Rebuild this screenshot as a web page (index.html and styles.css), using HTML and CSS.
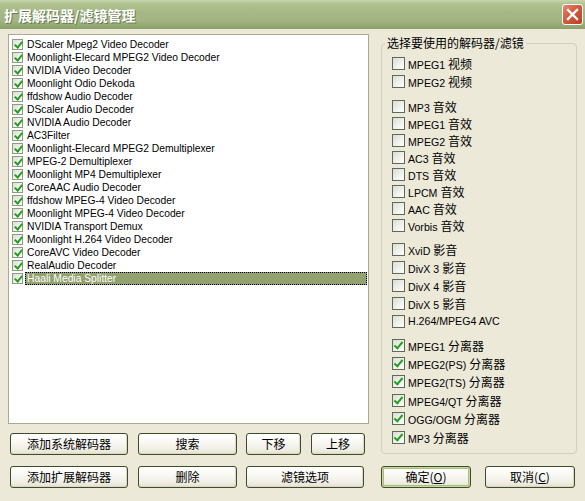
FILE: index.html
```html
<!DOCTYPE html>
<html lang="zh-CN">
<head>
<meta charset="utf-8">
<title>扩展解码器/滤镜管理</title>
<link rel="stylesheet" href="styles.css">
</head>
<body>
<div class="window">
  <div class="titlebar">
    <span class="title">扩展解码器/滤镜管理</span>
    <span class="close"><svg width="13" height="13" viewBox="0 0 13 13"><path d="M2 2 L11 11 M11 2 L2 11" stroke="#fff" stroke-width="2.4" stroke-linecap="square"/></svg></span>
  </div>
  <div class="main">
    <div class="left">
      <div class="list">
        <div class="item"><span class="cb on"></span><span class="txt">DScaler Mpeg2 Video Decoder</span></div>
        <div class="item"><span class="cb on"></span><span class="txt">Moonlight-Elecard MPEG2 Video Decoder</span></div>
        <div class="item"><span class="cb on"></span><span class="txt">NVIDIA Video Decoder</span></div>
        <div class="item"><span class="cb on"></span><span class="txt">Moonlight Odio Dekoda</span></div>
        <div class="item"><span class="cb on"></span><span class="txt">ffdshow Audio Decoder</span></div>
        <div class="item"><span class="cb on"></span><span class="txt">DScaler Audio Decoder</span></div>
        <div class="item"><span class="cb on"></span><span class="txt">NVIDIA Audio Decoder</span></div>
        <div class="item"><span class="cb on"></span><span class="txt">AC3Filter</span></div>
        <div class="item"><span class="cb on"></span><span class="txt">Moonlight-Elecard MPEG2 Demultiplexer</span></div>
        <div class="item"><span class="cb on"></span><span class="txt">MPEG-2 Demultiplexer</span></div>
        <div class="item"><span class="cb on"></span><span class="txt">Moonlight MP4 Demultiplexer</span></div>
        <div class="item"><span class="cb on"></span><span class="txt">CoreAAC Audio Decoder</span></div>
        <div class="item"><span class="cb on"></span><span class="txt">ffdshow MPEG-4 Video Decoder</span></div>
        <div class="item"><span class="cb on"></span><span class="txt">Moonlight MPEG-4 Video Decoder</span></div>
        <div class="item"><span class="cb on"></span><span class="txt">NVIDIA Transport Demux</span></div>
        <div class="item"><span class="cb on"></span><span class="txt">Moonlight H.264 Video Decoder</span></div>
        <div class="item"><span class="cb on"></span><span class="txt">CoreAVC Video Decoder</span></div>
        <div class="item"><span class="cb on"></span><span class="txt">RealAudio Decoder</span></div>
        <div class="item sel"><span class="cb on"></span><span class="txt">Haali Media Splitter</span></div>
      </div>
      <div class="btnrow r1">
        <span class="btn w118">添加系统解码器</span>
        <span class="btn w99">搜索</span>
        <span class="btn w55">下移</span>
        <span class="btn w54">上移</span>
      </div>
      <div class="btnrow r2">
        <span class="btn w118">添加扩展解码器</span>
        <span class="btn w99">删除</span>
        <span class="btn w118">滤镜选项</span>
      </div>
    </div>
    <div class="right">
      <fieldset class="group">
        <legend>选择要使用的解码器/滤镜</legend>
        <div class="grp g1">
          <div class="opt"><span class="cbx"></span><span class="lab">MPEG1 <span class="zh">视频</span></span></div>
          <div class="opt"><span class="cbx"></span><span class="lab">MPEG2 <span class="zh">视频</span></span></div>
        </div>
        <div class="grp g2">
          <div class="opt"><span class="cbx"></span><span class="lab">MP3 <span class="zh">音效</span></span></div>
          <div class="opt"><span class="cbx"></span><span class="lab">MPEG1 <span class="zh">音效</span></span></div>
          <div class="opt"><span class="cbx"></span><span class="lab">MPEG2 <span class="zh">音效</span></span></div>
          <div class="opt"><span class="cbx"></span><span class="lab">AC3 <span class="zh">音效</span></span></div>
          <div class="opt"><span class="cbx"></span><span class="lab">DTS <span class="zh">音效</span></span></div>
          <div class="opt"><span class="cbx"></span><span class="lab">LPCM <span class="zh">音效</span></span></div>
          <div class="opt"><span class="cbx"></span><span class="lab">AAC <span class="zh">音效</span></span></div>
          <div class="opt"><span class="cbx"></span><span class="lab">Vorbis <span class="zh">音效</span></span></div>
        </div>
        <div class="grp g3">
          <div class="opt"><span class="cbx"></span><span class="lab">XviD <span class="zh">影音</span></span></div>
          <div class="opt"><span class="cbx"></span><span class="lab">DivX 3 <span class="zh">影音</span></span></div>
          <div class="opt"><span class="cbx"></span><span class="lab">DivX 4 <span class="zh">影音</span></span></div>
          <div class="opt"><span class="cbx"></span><span class="lab">DivX 5 <span class="zh">影音</span></span></div>
          <div class="opt"><span class="cbx"></span><span class="lab">H.264/MPEG4 AVC</span></div>
        </div>
        <div class="grp g4">
          <div class="opt"><span class="cbx on"></span><span class="lab">MPEG1 <span class="zh">分离器</span></span></div>
          <div class="opt"><span class="cbx on"></span><span class="lab">MPEG2(PS) <span class="zh">分离器</span></span></div>
          <div class="opt"><span class="cbx on"></span><span class="lab">MPEG2(TS) <span class="zh">分离器</span></span></div>
          <div class="opt"><span class="cbx on"></span><span class="lab">MPEG4/QT <span class="zh">分离器</span></span></div>
          <div class="opt"><span class="cbx on"></span><span class="lab">OGG/OGM <span class="zh">分离器</span></span></div>
          <div class="opt"><span class="cbx on"></span><span class="lab">MP3 <span class="zh">分离器</span></span></div>
        </div>
      </fieldset>
      <div class="btnrow r3">
        <span class="btn w90 default">确定(<u>O</u>)</span>
        <span class="btn w90">取消(<u>C</u>)</span>
      </div>
    </div>
  </div>
</div>
</body>
</html>
```
FILE: styles.css
```css
html, body {
  margin: 0;
  padding: 0;
}
body {
  width: 585px;
  height: 501px;
  overflow: hidden;
  background: #ece9d8;
  font-family: "Liberation Sans", "Noto Sans CJK SC", sans-serif;
  color: #000;
}
.window {
  display: flex;
  flex-direction: column;
}
.titlebar {
  height: 29px;
  display: flex;
  align-items: center;
  padding: 0 2px 0 4px;
  background: linear-gradient(to bottom, #c9d6ae 0%, #b2c392 12%, #a7b987 40%, #a2b583 70%, #93a872 90%, #8b9f6b 100%);
}
.title {
  color: #fff;
  font-family: "Noto Sans CJK SC", sans-serif;
  font-weight: bold;
  font-size: 14px;
  line-height: 16px;
  text-shadow: 1px 1px 0 #6b7b52;
}
.close {
  margin-left: auto;
  width: 21px;
  height: 21px;
  box-sizing: border-box;
  border: 1px solid #fff;
  border-radius: 3px;
  background: linear-gradient(135deg, #e58a6e 0%, #d25b3c 45%, #b8402a 100%);
  display: flex;
  align-items: center;
  justify-content: center;
}
.main {
  display: flex;
  padding: 5px 0 0 8px;
  gap: 12px;
}
.left {
  width: 361px;
  display: flex;
  flex-direction: column;
}
.list {
  height: 390px;
  box-sizing: border-box;
  border: 1px solid #a7ab90;
  background: #fff;
  padding: 3px 0 0 3px;
}
.item {
  display: flex;
  align-items: center;
  height: 13px;
}
.cb {
  position: relative;
  width: 11px;
  height: 11px;
  box-sizing: border-box;
  border: 1px solid #8f9a85;
  background: linear-gradient(135deg, #dcdcd4 0%, #f4f4f0 60%, #ffffff 100%);
  margin-right: 2px;
  flex: none;
}
.cb.on::after {
  content: "";
  position: absolute;
  left: 3px;
  top: 0px;
  width: 3px;
  height: 6px;
  border: solid #21a121;
  border-width: 0 2px 2px 0;
  transform: rotate(40deg);
}
.txt {
  flex: 1;
  height: 13px;
  line-height: 13px;
  padding: 0 2px;
  margin-right: 1px;
  font-size: 10.3px;
  white-space: nowrap;
}
.item.sel .txt {
  background: #93a070;
  color: #fff;
  outline: 1px dotted #000;
  outline-offset: -1px;
}
.btnrow {
  display: flex;
}
.r1 {
  margin-top: 9px;
  padding-left: 2px;
  gap: 10px;
}
.r1 .w55, .r2 .w118 + .w99 + .w118 {
  margin-left: -1px;
}
.r2 {
  margin-top: 11px;
  padding-left: 2px;
  gap: 10px;
}
.r3 {
  margin-top: 12px;
  gap: 14px;
}
.btn {
  box-sizing: border-box;
  height: 22px;
  border: 1px solid #3f4b2b;
  border-radius: 3px;
  background: linear-gradient(to bottom, #ffffff 0%, #f9f8f3 40%, #efede3 80%, #e3e0d0 100%);
  box-shadow: inset -1px -1px 0 #dcd8c4;
  display: flex;
  align-items: center;
  justify-content: center;
  font-family: "Noto Sans CJK SC", sans-serif;
  font-size: 12px;
  line-height: 14px;
  flex: none;
}
.btn u {
  text-decoration: underline;
  text-underline-offset: 1px;
}
.btn.default {
  box-shadow: inset 0 0 0 1px #c6d8a2, inset 0 0 0 2px #a9bf80;
}
.w118 { width: 118px; }
.w99 { width: 99px; }
.w55 { width: 55px; }
.w54 { width: 54px; }
.w90 { width: 90px; }
.right {
  width: 196px;
  display: flex;
  flex-direction: column;
}
.group {
  margin: 2px 0 0 0;
  padding: 4px 0 0 10px;
  height: 418px;
  box-sizing: border-box;
  border: 1px solid #d0d0bf;
  border-radius: 4px;
  min-width: 0;
}
.group legend {
  margin-left: -7px;
  padding: 0 2px;
  font-family: "Noto Sans CJK SC", sans-serif;
  font-size: 12px;
  line-height: 14px;
}
.grp {
  display: flex;
  flex-direction: column;
}
.opt {
  display: flex;
  align-items: center;
  height: 18px;
  font-size: 10.6px;
  white-space: nowrap;
}
.lab {
  white-space: pre;
}
.g2 { margin-top: 8px; }
.g2 .opt { height: 17px; }
.g3 { margin-top: 6px; }
.g4 { margin-top: 6px; }
.g4 .opt { height: 18.4px; }
.zh {
  font-family: "Noto Sans CJK SC", sans-serif;
  font-size: 12px;
}
.cbx {
  position: relative;
  width: 13px;
  height: 13px;
  box-sizing: border-box;
  border: 1px solid #5c6b58;
  background: linear-gradient(135deg, #dcdcd5 0%, #efefea 50%, #ffffff 100%);
  margin-right: 3px;
  flex: none;
}
.cbx.on::after {
  content: "";
  position: absolute;
  left: 3px;
  top: 0px;
  width: 3px;
  height: 7px;
  border: solid #21a121;
  border-width: 0 2px 2px 0;
  transform: rotate(40deg);
}
```
